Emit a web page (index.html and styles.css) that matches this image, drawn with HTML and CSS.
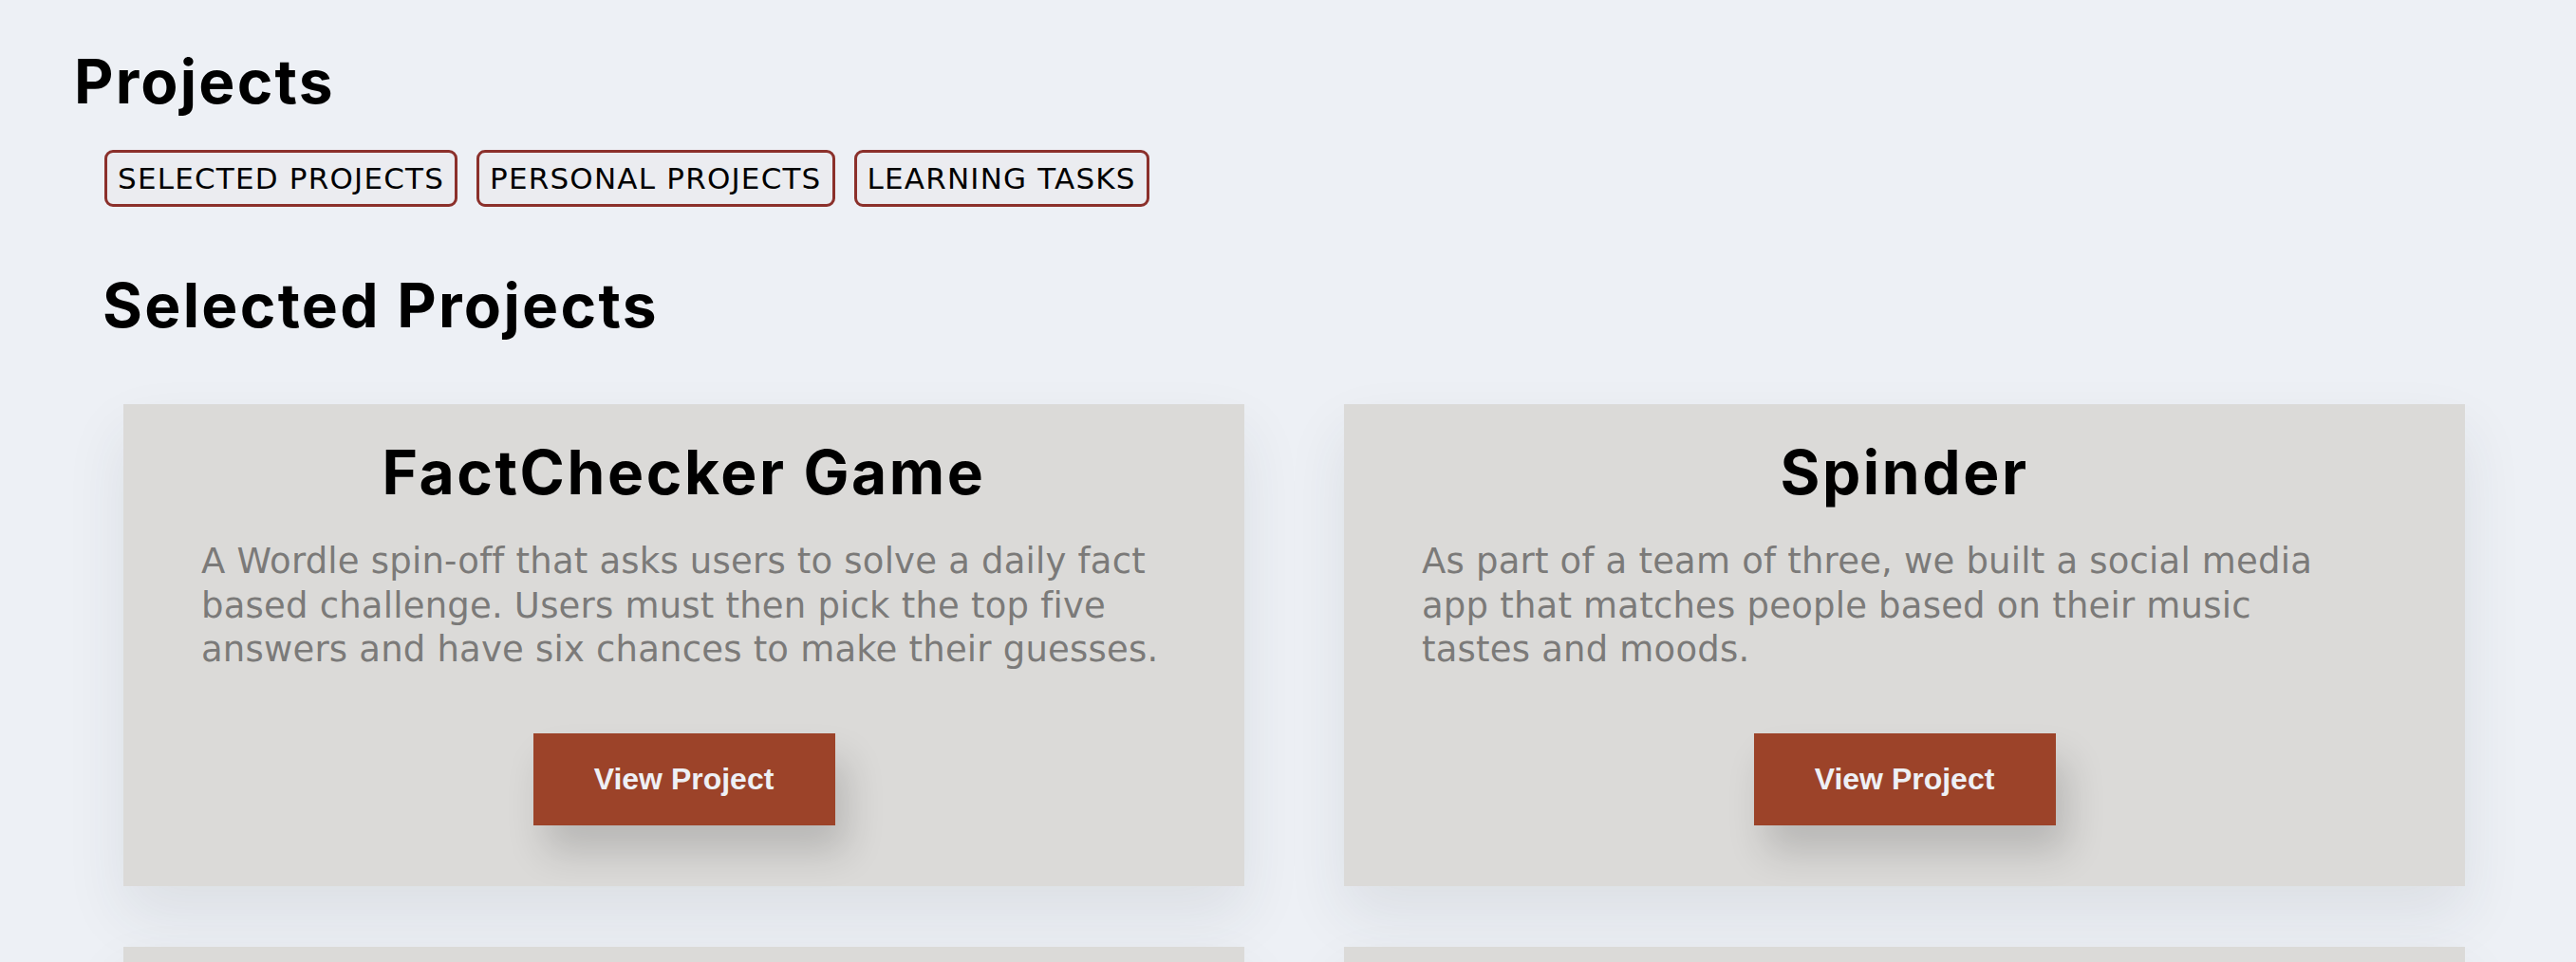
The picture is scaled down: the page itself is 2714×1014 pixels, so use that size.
FILE: index.html
```html
<!DOCTYPE html>
<html lang="en">
<head>
<meta charset="utf-8">
<title>Projects</title>
<link rel="stylesheet" href="styles.css">
</head>
<body>
<main class="page">
  <h1 class="page-title">Projects</h1>
  <section class="projects">
    <nav class="tabs">
      <a class="tab" href="#selected">SELECTED PROJECTS</a>
      <a class="tab" href="#personal">PERSONAL PROJECTS</a>
      <a class="tab" href="#learning">LEARNING TASKS</a>
    </nav>
    <h2 class="section-title" id="selected">Selected Projects</h2>
    <div class="grid">
      <article class="card">
        <h3 class="card-title">FactChecker Game</h3>
        <p class="card-text">A Wordle spin-off that asks users to solve a daily fact<br>based challenge. Users must then pick the top five<br>answers and have six chances to make their guesses.</p>
        <a class="btn" href="#">View Project</a>
      </article>
      <article class="card">
        <h3 class="card-title">Spinder</h3>
        <p class="card-text">As part of a team of three, we built a social media<br>app that matches people based on their music<br>tastes and moods.</p>
        <a class="btn" href="#">View Project</a>
      </article>
      <article class="card card-empty"></article>
      <article class="card card-empty"></article>
    </div>
  </section>
</main>
</body>
</html>
```
FILE: styles.css
```css
html, body {
  margin: 0;
  padding: 0;
  background: #edf0f5;
}
body {
  font-family: "DejaVu Sans", sans-serif;
  color: #000;
}
.page {
  padding-top: 47px;
}
.page-title {
  font-family: "Inter", "DejaVu Sans", sans-serif;
  font-weight: 700;
  font-size: 64px;
  line-height: 78px;
  letter-spacing: 2.2px;
  margin: 0 0 33px 78px;
}
.projects {
  padding-left: 110px;
}
.tabs {
  display: flex;
  gap: 20px;
}
.tab {
  display: inline-flex;
  align-items: center;
  height: 60px;
  box-sizing: border-box;
  padding: 0 11px;
  border: 3px solid #8b302b;
  border-radius: 9px;
  background: #ebecf0;
  color: #000;
  text-decoration: none;
  font-family: "DejaVu Sans", sans-serif;
  font-size: 31px;
  letter-spacing: 1.2px;
  font-weight: 400;
}
.section-title {
  font-family: "Inter", "DejaVu Sans", sans-serif;
  font-weight: 700;
  font-size: 64px;
  line-height: 78px;
  letter-spacing: 2.3px;
  margin: 65px 0 65px -2px;
}
.grid {
  display: grid;
  grid-template-columns: 1181px 1181px;
  column-gap: 105px;
  row-gap: 64px;
  margin-left: 20px;
}
.card {
  background: #dbdad8;
  box-shadow: 0 30px 60px rgba(40, 50, 70, 0.09);
  display: flex;
  flex-direction: column;
  align-items: center;
  padding: 33px 0 64px;
  height: 508px;
  box-sizing: border-box;
}
.card-title {
  font-family: "Inter", "DejaVu Sans", sans-serif;
  font-weight: 700;
  font-size: 64px;
  line-height: 78px;
  letter-spacing: 2.6px;
  margin: 0;
  text-align: center;
}
.card-text {
  align-self: stretch;
  margin: 32px 0 0;
  padding: 0 30px 0 82px;
  font-size: 37px;
  line-height: 46.7px;
  letter-spacing: 0.2px;
  color: #7b7a79;
}
.btn {
  margin-top: 64px;
  width: 318px;
  height: 97px;
  display: flex;
  align-items: center;
  justify-content: center;
  background: #9c4329;
  color: #eef0f5;
  text-decoration: none;
  font-family: "Liberation Sans", Arial, sans-serif;
  font-weight: 700;
  font-size: 32px;
  box-shadow: 12px 28px 40px rgba(0, 0, 0, 0.16);
}
```
